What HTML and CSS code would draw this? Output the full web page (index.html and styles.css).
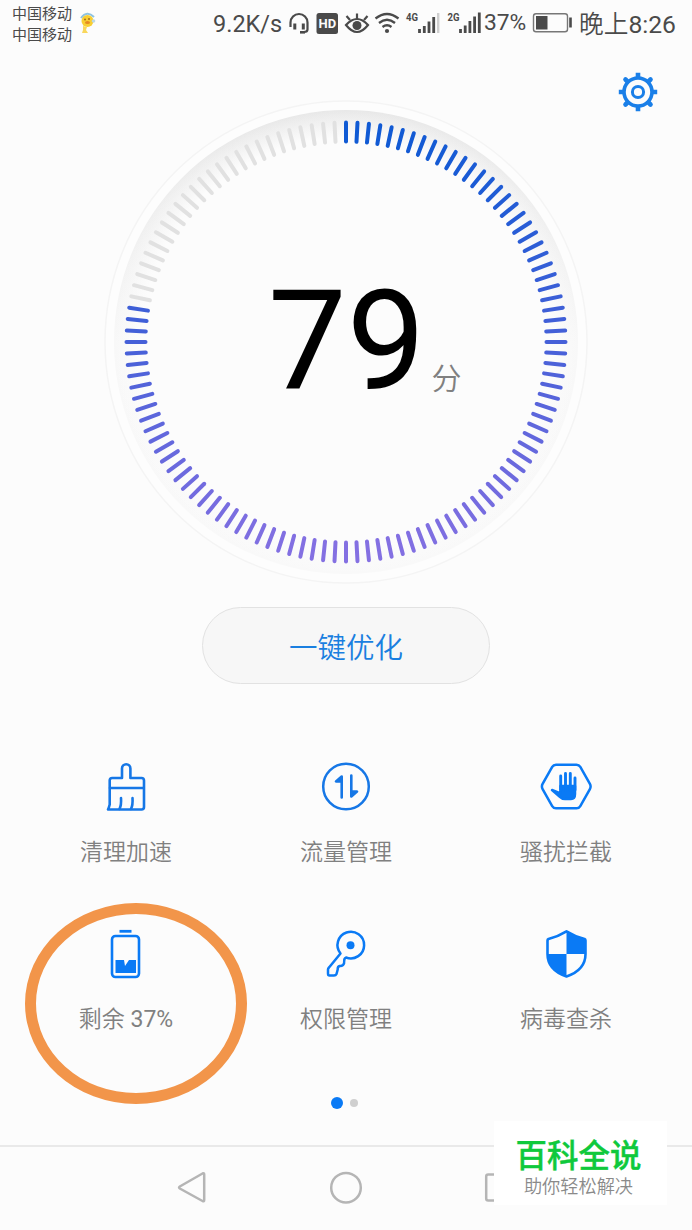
FILE: index.html
```html
<!DOCTYPE html>
<html lang="zh-CN">
<head>
    <meta charset="UTF-8">
    <meta name="viewport" content="width=device-width, initial-scale=1.0">
    <title>手机管家</title>
    <link rel="stylesheet" href="styles.css">
</head>
<body>
    <div class="status-bar">
        <div class="carriers">
            <div>中国移动</div>
            <div>中国移动</div>
        </div>
        <svg class="mascot" width="20" height="26" viewBox="0 0 20 26">
            <path d="M3 7 Q9 -1 16 6" fill="none" stroke="#8fc3e0" stroke-width="2"/>
            <circle cx="9.500" cy="10" r="6" fill="#f8ce32"/>
            <circle cx="15.500" cy="10" r="1.800" fill="#bcd8e4"/>
            <circle cx="7" cy="8.500" r="1" fill="#a56b1d"/>
            <circle cx="11" cy="8" r="1" fill="#a56b1d"/>
            <ellipse cx="9.500" cy="11.500" rx="2.500" ry="1.500" fill="#e58a22"/>
            <path d="M5 15l4 1-1 3 2 3H4l1-3z" fill="#f9d75c"/>
        </svg>
        <span class="speed">9.2K/s</span>
        <svg width="26" height="32" viewBox="286 7 26 32">
            <path d="M290.500 27v-4.500a8.500 8.500 0 0 1 17 0v7q0 2.500-3.500 2.500" fill="none" stroke="#4a4a4a" stroke-width="2.200"/>
            <path d="M294.800 23.500v6M303.300 23.500v6" stroke="#4a4a4a" stroke-width="3"/>
            <path d="M300 32.300h5" stroke="#4a4a4a" stroke-width="2.600"/>
        </svg>
        <svg width="30" height="32" viewBox="312 7 30 32">
            <rect x="316.500" y="13" width="21.500" height="21" rx="2.500" fill="#4a4a4a"/>
            <text class="hd" x="327.300" y="28.300" text-anchor="middle">HD</text>
        </svg>
        <svg width="30" height="32" viewBox="342 7 30 32">
            <path d="M346 25q11-12 22 0q-11 14-22 0z" fill="none" stroke="#4a4a4a" stroke-width="2.200"/>
            <circle cx="357" cy="25.500" r="4.500" fill="#4a4a4a"/>
            <path d="M357 19v-5.500M350 20l-3.500-4M364 20l3.500-4" stroke="#4a4a4a" stroke-width="2.200"/>
        </svg>
        <svg width="31" height="32" viewBox="372 7 31 32">
            <path d="M375.500 18.500q11.500-9 23 0M379 23q8-6.500 16 0M382.500 27q4.500-3.500 9 0" fill="none" stroke="#4a4a4a" stroke-width="2.300"/>
            <circle cx="387" cy="31" r="2.100" fill="#4a4a4a"/>
        </svg>
        <svg width="41" height="32" viewBox="403 7 41 32">
            <text class="net" x="406" y="21" textLength="12" lengthAdjust="spacingAndGlyphs">4G</text>
            <path d="M419.500 33v-4M424.300 33v-7M429 33v-11.500M433.700 33v-16" stroke="#4a4a4a" stroke-width="2.800"/>
            <path d="M438.200 33V13" stroke="#cfcfcf" stroke-width="2.400"/>
        </svg>
        <svg width="40" height="32" viewBox="444 7 40 32">
            <text class="net" x="447.500" y="21" textLength="12" lengthAdjust="spacingAndGlyphs">2G</text>
            <path d="M460.500 33v-4M465.200 33v-7.500M469.900 33v-12M474.600 33v-16.500M479.300 33V12.500" stroke="#4a4a4a" stroke-width="2.800"/>
        </svg>
        <span class="percent">37%</span>
        <svg width="48" height="32" viewBox="530 7 48 32">
            <rect x="533.500" y="13.700" width="34" height="18" rx="2.500" fill="none" stroke="#777" stroke-width="1.400"/>
            <rect x="536" y="16" width="11.500" height="13.500" fill="#4a4a4a"/>
            <path d="M570.500 17.500v10" stroke="#4a4a4a" stroke-width="2.600"/>
        </svg>
        <span class="clock">晚上<span class="num">8:26</span></span>
    </div>

    <div class="header">
        <svg class="gear" width="40" height="40" viewBox="-20 -20 40 40" fill="none" stroke="#1a7fe8">
            <circle r="14" stroke-width="3.600"/>
            <circle r="5.600" stroke-width="3"/>
            <g stroke-width="4.600">
                <path d="M0-15V-19.200M0 15V19.200M-15 0H-19.200M15 0H19.200"/>
                <path d="M10.600-10.600L12.500-12.500M10.600 10.600L12.500 12.500M-10.600 10.600L-12.500 12.500M-10.600-10.600L-12.500-12.500" stroke-linecap="round" stroke-width="4.600"/>
            </g>
        </svg>
    </div>

    <div class="dial">
        <svg class="dial-ring" width="484" height="484" viewBox="-242 -242 484 484">
            <defs>
                <linearGradient id="shade" x1="0" y1="0" x2="0" y2="1">
                    <stop offset="0" stop-color="#e8e8e8"/>
                    <stop offset="0.250" stop-color="#f0f0f0"/>
                    <stop offset="0.500" stop-color="#f8f8f8"/>
                    <stop offset="1" stop-color="#f9f9f9"/>
                </linearGradient>
                <radialGradient id="inner">
                    <stop offset="0.880" stop-color="#fcfcfc"/>
                    <stop offset="1" stop-color="#fcfcfc" stop-opacity="0"/>
                </radialGradient>
            </defs>
            <circle r="241" fill="#fdfdfd" stroke="#f4f4f4" stroke-width="1.500"/>
            <circle r="232" fill="url(#shade)"/>
            <circle r="232" fill="url(#inner)"/>
            <g id="ticks"></g>
        </svg>
        <div class="score">
            <span class="score-num">79</span>
            <span class="score-unit">分</span>
        </div>
    </div>

    <button class="optimize">一键优化</button>

    <div class="tools">
        <div class="tool">
            <svg width="52" height="52" viewBox="100 761 52 52" fill="none" stroke="#1677e6" stroke-width="2.600" stroke-linejoin="round" stroke-linecap="round">
                <path d="M122 778v-9.500a4.200 4.200 0 0 1 8.400 0v9.500H141.500q2.500 0 2.500 2.500V807q0 2.500-2.500 2.500H108q1-2 1.700-5V780.500q0-2.500 2.500-2.500z"/>
                <path d="M110 788h33.500M121 798q.500 7-1.500 11M132.500 798q.500 7-1.500 11"/>
            </svg>
            <span>清理加速</span>
        </div>
        <div class="tool">
            <svg width="52" height="52" viewBox="320 761 52 52">
                <circle cx="346" cy="786.500" r="22.800" fill="none" stroke="#1677e6" stroke-width="2.500"/>
                <path d="M341.700 797.500V776.500L336 781.500H341" fill="#1677e6" stroke="#1677e6" stroke-width="2.600" stroke-linejoin="round" stroke-linecap="round"/>
                <path d="M351.300 775.500V796.500L357 791.500H351.500" fill="#1677e6" stroke="#1677e6" stroke-width="2.600" stroke-linejoin="round" stroke-linecap="round"/>
            </svg>
            <span>流量管理</span>
        </div>
        <div class="tool">
            <svg width="52" height="52" viewBox="540 761 52 52">
                <path d="M556 764.700h20.500q2.500 0 3.800 2.200l9.600 17q1.400 2.600 0 5.200l-9.600 17q-1.300 2.200-3.800 2.200H556q-2.500 0-3.800-2.200l-9.600-17q-1.400-2.600 0-5.200l9.600-17q1.300-2.200 3.800-2.200z" fill="none" stroke="#0a7af5" stroke-width="2.500"/>
                <path d="M552 790l8.500 3.500V786H575v8q0 5-4 5h-6q-3 0-5.500-2.500z" fill="#0a7af5" stroke="#0a7af5" stroke-width="2.500" stroke-linejoin="round" stroke-linecap="round"/>
                <path d="M560.700 790V776M565.500 790V773.500M570.300 790V773.500M575 790V778" stroke="#0a7af5" stroke-width="2.900" stroke-linecap="round"/>
            </svg>
            <span>骚扰拦截</span>
        </div>
        <div class="tool">
            <svg width="52" height="52" viewBox="100 928 52 52">
                <path d="M119.500 931.300h12" stroke="#0a7af5" stroke-width="2.800"/>
                <rect x="112" y="936" width="27" height="41" rx="3.500" fill="none" stroke="#0a7af5" stroke-width="2.600"/>
                <path d="M115.500 960h8.500l1 6 4-6h7v13h-20.500z" fill="#0a7af5"/>
            </svg>
            <span>剩余 <span class="num">37%</span></span>
            <div class="highlight"></div>
        </div>
        <div class="tool">
            <svg width="52" height="52" viewBox="320 928 52 52">
                <path d="M340.500 953.500A13.300 13.300 0 1 1 346 957.500Q344 958.500 344.200 961Q344.500 963.500 343 965Q341.500 966.300 339.700 966Q337.500 966.500 337.700 969.500L336.500 974Q335.800 975.500 334 975.500H329.500Q328 975.500 328 973.500V969.500Q328 968.500 329 967.500z" fill="none" stroke="#0a7af5" stroke-width="2.500" stroke-linejoin="round"/>
                <circle cx="350.500" cy="945.300" r="4" fill="#0a7af5"/>
            </svg>
            <span>权限管理</span>
        </div>
        <div class="tool">
            <svg width="52" height="52" viewBox="540 928 52 52">
                <path d="M566.500 931.300Q575 936.500 584.500 939q1 .500 1 1.500V954q0 16-19 22.500q-19-6.500-19-22.500V940.500q0-1 1-1.500Q558 936.500 566.500 931.300z" fill="#fcfcfc" stroke="#0a7af5" stroke-width="2.600" stroke-linejoin="round"/>
                <path d="M566.500 931.300Q575 936.500 585.500 939.500V954H547.500q0 16 19 22.500z" fill="#0a7af5"/>
            </svg>
            <span>病毒查杀</span>
        </div>
    </div>

    <div class="pager">
        <span class="dot active"></span>
        <span class="dot"></span>
    </div>

    <div class="nav-bar">
        <svg width="32" height="36" viewBox="176 1170 32 36">
            <path d="M202.500 1173.500q1.700-.800 1.700 1V1200q0 2-1.700 1L179.800 1188.500q-1.500-1 0-2z" fill="none" stroke="#b5b5b5" stroke-width="2.500"/>
        </svg>
        <svg width="36" height="36" viewBox="328 1170 36 36">
            <circle cx="346" cy="1187.700" r="14.800" fill="none" stroke="#b5b5b5" stroke-width="2.500"/>
        </svg>
        <svg width="32" height="36" viewBox="484 1170 32 36">
            <rect x="486.200" y="1174.500" width="27" height="26" rx="2" fill="none" stroke="#b5b5b5" stroke-width="2.500"/>
        </svg>
    </div>

    <div class="watermark">
        <div class="watermark-title">百科全说</div>
        <div class="watermark-sub">助你轻松解决</div>
    </div>

    <script>
        const TOTAL = 120;
        const LAST = 93;
        const stops = [[16, 90, 212], [70, 96, 216], [132, 112, 226]];

        // colour runs from blue at the top to violet at the bottom
        function tickColor(i) {
            const t = 1 - Math.cos(i / TOTAL * Math.PI * 2);
            const a = stops[t < 1 ? 0 : 1];
            const b = stops[t < 1 ? 1 : 2];
            const k = t < 1 ? t : t - 1;
            return 'rgb(' + a.map((v, n) => Math.round(v + (b[n] - v) * k)).join(',') + ')';
        }

        let html = '';
        for (let i = 0; i < TOTAL; i++) {
            const color = i <= LAST ? tickColor(i) : '#e1e1e1';
            html += `<line y1="-219.500" y2="-200.500" stroke="${color}" transform="rotate(${i * 360 / TOTAL})"/>`;
        }
        document.getElementById('ticks').innerHTML = html;
    </script>
</body>
</html>
```
FILE: styles.css
```css
body {
    margin: 0;
    width: 692px;
    height: 1230px;
    position: relative;
    overflow: hidden;
    background-color: #fcfcfc;
    font-family: Roboto, "Noto Sans CJK SC", sans-serif;
    display: flex;
    flex-direction: column;
}
svg {
    display: block;
    flex: none;
}
.num {
    font-weight: 400;
}
.status-bar {
    height: 48px;
    display: flex;
    align-items: flex-start;
    padding: 7px 0 0 12px;
    box-sizing: border-box;
    color: #4a4a4a;
    white-space: nowrap;
}
.carriers {
    width: 66px;
    margin-top: -3px;
    font-size: 15px;
    line-height: 21px;
}
.mascot {
    margin-top: 4px;
}
.speed {
    width: 73px;
    margin-left: 115px;
    font-size: 23.5px;
    line-height: 35px;
}
.percent {
    width: 46px;
    font-size: 22.8px;
    line-height: 32px;
}
.clock {
    margin-left: 1px;
    font-size: 24.7px;
    font-weight: 350;
    line-height: 35px;
}
.hd {
    fill: #fcfcfc;
    font: bold 13px Roboto, sans-serif;
}
.net {
    fill: #4a4a4a;
    font: bold 11.5px Roboto, sans-serif;
}
.header {
    height: 52px;
    box-sizing: border-box;
    padding: 24px 34px 0 0;
    display: flex;
    justify-content: flex-end;
    align-items: flex-start;
}
.dial {
    width: 484px;
    height: 484px;
    align-self: center;
    display: grid;
}
.dial-ring, .score {
    grid-area: 1 / 1;
}
#ticks {
    stroke-width: 4;
    stroke-linecap: round;
}
.score {
    display: flex;
    align-items: baseline;
    padding: 158px 0 0 164px;
}
.score-num {
    font-size: 140px;
    line-height: 166px;
    color: #000;
}
.score-unit {
    margin-left: 6px;
    font-size: 30px;
    line-height: 40px;
    font-weight: 350;
    color: #808080;
}
.optimize {
    width: 288px;
    height: 77px;
    margin-top: 23px;
    align-self: center;
    border: 1.5px solid #e2e2e2;
    border-radius: 39px;
    background-color: #f7f7f7;
    color: #1a7fe0;
    font-family: inherit;
    font-size: 28.5px;
    font-weight: 350;
    padding: 0;
}
.tools {
    display: grid;
    grid-template-columns: repeat(3, 220px);
    grid-auto-rows: 167px;
    justify-content: center;
    margin-top: 77px;
}
.tool {
    position: relative;
    display: flex;
    flex-direction: column;
    align-items: center;
    font-size: 23px;
    font-weight: 350;
    line-height: 34px;
    color: #808080;
}
.tool > span {
    margin-top: 23px;
}
/* ring drawn around the battery entry */
.highlight {
    position: absolute;
    left: 9px;
    top: -25px;
    width: 222px;
    height: 201px;
    box-sizing: border-box;
    border: 11.5px solid #f2954a;
    border-radius: 50%;
}
.pager {
    display: flex;
    justify-content: center;
    align-items: center;
    gap: 7px;
    height: 12px;
    margin-top: 2px;
    margin-right: 4px;
}
.dot {
    width: 8px;
    height: 8px;
    border-radius: 50%;
    background-color: #cfcfcf;
}
.dot.active {
    width: 12px;
    height: 12px;
    background-color: #0a7af5;
}
.nav-bar {
    margin-top: auto;
    height: 85px;
    box-sizing: border-box;
    border-top: 2px solid #e9e9e9;
    display: flex;
    justify-content: space-between;
    padding: 23px 176px 0;
}
.watermark {
    position: absolute;
    left: 494px;
    top: 1121px;
    width: 173px;
    height: 84px;
    box-sizing: border-box;
    padding-top: 16px;
    background-color: #fff;
    text-align: center;
}
.watermark-title {
    margin-right: 4px;
    font-size: 31.5px;
    line-height: 39px;
    font-weight: 500;
    -webkit-text-stroke: 0.4px #0fc93c;
    color: #0fc93c;
}
.watermark-sub {
    margin-right: 4px;
    font-size: 18.2px;
    line-height: 22px;
    font-weight: 350;
    color: #8a8a8a;
}
```
